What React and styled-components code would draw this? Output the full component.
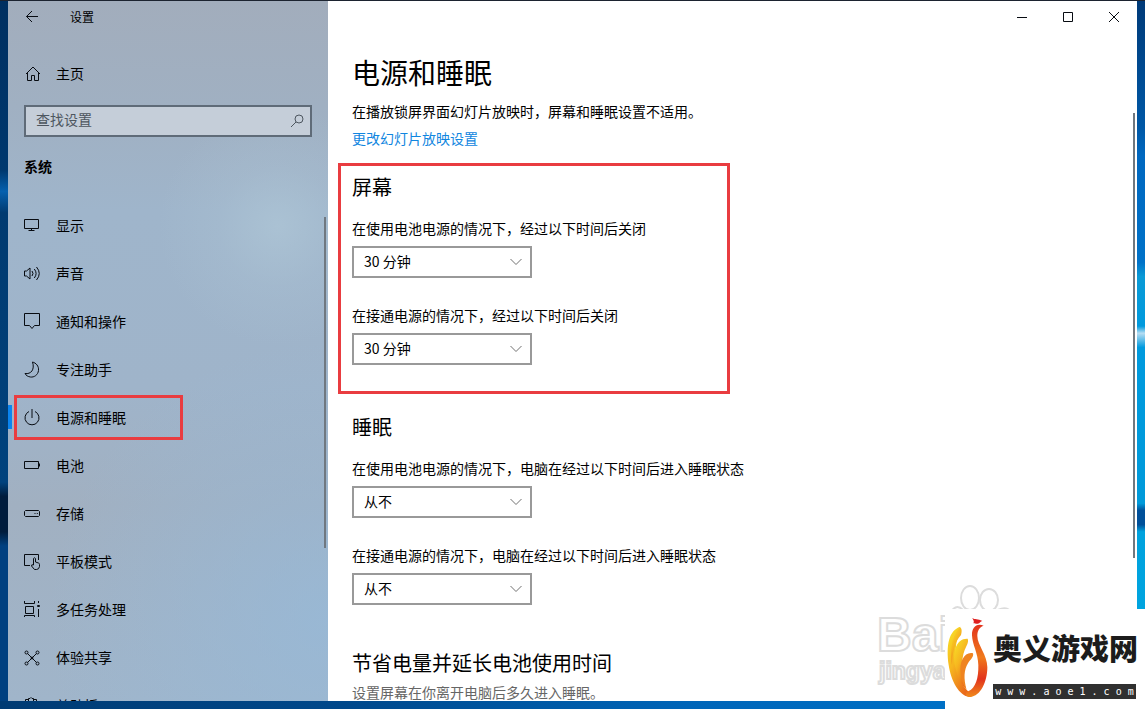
import React from "react";
import styled, { createGlobalStyle } from "styled-components";

const GlobalStyle = createGlobalStyle`
  *, *::before, *::after { box-sizing: border-box; }
  body {
    margin: 0;
    font-family: "Noto Sans CJK SC", "Liberation Sans", sans-serif;
    font-size: 14px;
    line-height: 20px;
    color: #000;
  }
  h1, h2, p, ul { margin: 0; padding: 0; font-weight: 400; }
  button, input, select { font: inherit; color: inherit; }
`;

const Desktop = styled.div`
  position: relative;
  display: flex;
  height: 100vh;
  padding: 1px 8px 8px;
  overflow: hidden;
  background:
    linear-gradient(90deg, #003b73, #00488b 30%, #0065b8 60%, #0079d0) bottom / 100% 8px no-repeat,
    linear-gradient(#1c2330, #1c2330) top / 100% 1px no-repeat,
    linear-gradient(#002f60, #00386e 24%, #0560ae 27%, #003a70 30%, #00427d 68%, #001c3c 70%, #001c3c 75%, #004080 77%) left / 8px 100% no-repeat,
    linear-gradient(#003a78, #0058a6 18%, #0068c0 22%, #0072c8 37%, #0a9ad6 39%, #009ade 46%, #b5dcf2 47%, #009ade 49%, #009ada 71%, #00509a 72%, #00509a 74%, #00a2de 75%, #00a6e0) right / 8px 100% no-repeat,
    #00488b;
`;

const Window = styled.div`
  flex: 1;
  display: flex;
  min-width: 0;
  overflow: hidden;
  background: #fff;
`;

const Sidebar = styled.aside`
  position: relative;
  flex: 0 0 320px;
  overflow: hidden;
  background:
    radial-gradient(circle at 270px 225px, rgba(178, 202, 217, 0.6), rgba(178, 202, 217, 0.2) 60px, rgba(178, 202, 217, 0) 120px),
    radial-gradient(circle at 320px 620px, rgba(150, 186, 218, 0.7), rgba(150, 186, 218, 0) 280px),
    linear-gradient(#a2adbc, #a0b0c2 15%, #9fb5cb 30%, #9fb4ca 55%, #a1b0c1 72%, #a0b5ca);
`;

const SidebarTitle = styled.header`
  display: flex;
  align-items: center;
  height: 32px;
  font-size: 12px;
`;

const BackButton = styled.button`
  display: flex;
  align-items: center;
  justify-content: center;
  width: 48px;
  height: 32px;
  margin-right: 14px;
  padding: 0;
  border: 0;
  background: none;
`;

const NavLink = styled.a`
  position: relative;
  display: flex;
  align-items: center;
  gap: 16px;
  height: 48px;
  padding: 0 16px;
  color: #000;
  text-decoration: none;
`;

const NavText = styled.span`
  padding-bottom: 2px;
`;

const HomeLink = styled(NavLink)`
  margin-top: 17px;
`;

const ActiveBar = styled.span`
  position: absolute;
  left: 0;
  top: 11px;
  width: 4px;
  height: 24px;
  background: #0a84f0;
`;

const Callout = styled.span`
  position: absolute;
  left: 6px;
  top: 1px;
  width: 169px;
  height: 45px;
  border: 3px solid #e93c40;
`;

const Search = styled.label`
  display: flex;
  align-items: center;
  height: 32px;
  margin: 7px 16px 0;
  padding: 0 5px 0 10px;
  border: 2px solid #5f6b78;
  background: #c5ced9;
`;

const SearchInput = styled.input`
  flex: 1;
  min-width: 0;
  height: 24px;
  padding: 0 0 4px;
  border: 0;
  outline: 0;
  background: none;
  &::placeholder { color: #4d565f; opacity: 1; }
`;

const SidebarHeading = styled.h2`
  margin: 17px 16px 24px;
  font-size: 14px;
  line-height: 24px;
  font-weight: 700;
`;

const NavList = styled.ul`
  list-style: none;
`;

const Scrollbar = styled.div`
  position: absolute;
  right: 2px;
  top: ${(p) => p.$top};
  width: 2px;
  height: ${(p) => p.$height};
  background: #707880;
`;

const Icon = styled.svg`
  flex: none;
  width: ${(p) => p.$size || 16}px;
  height: ${(p) => p.$size || 16}px;
  overflow: visible;
  fill: none;
  stroke: ${(p) => p.$color || "#080c12"};
  stroke-width: ${(p) => p.$weight || 1};
`;

const Main = styled.main`
  position: relative;
  flex: 1;
  min-width: 0;
  overflow: hidden;
`;

const WindowControls = styled.div`
  display: flex;
  justify-content: flex-end;
`;

const ControlButton = styled.button`
  display: flex;
  align-items: center;
  justify-content: center;
  width: 46px;
  height: 32px;
  padding: 0;
  border: 0;
  background: none;
`;

const Content = styled.div`
  padding: 19px 24px 0 10px;
`;

const Intro = styled.div`
  padding-left: 14px;
`;

const Title = styled.h1`
  margin-bottom: 9px;
  font-size: 28px;
  line-height: 40px;
`;

const TextLink = styled.a`
  display: inline-block;
  margin-top: 7px;
  color: #1086e0;
  text-decoration: none;
`;

const Section = styled.section`
  max-width: 392px;
  margin-top: ${(p) => p.$gap}px;
  padding: ${(p) => (p.$marked ? "7px 11px 26px" : "0 11px")};
  border: 3px solid ${(p) => (p.$marked ? "#e93c40" : "transparent")};
  border-width: ${(p) => (p.$marked ? "3px" : "0 3px")};
  white-space: nowrap;
`;

const SectionTitle = styled.h2`
  font-size: 20px;
  line-height: 28px;
`;

const Field = styled.div`
  margin-top: ${(p) => (p.$first ? 17 : 27)}px;
`;

const FieldLabel = styled.label`
  display: block;
  margin-bottom: 8px;
`;

const SelectBox = styled.div`
  position: relative;
  width: 180px;
  height: 32px;
`;

const Select = styled.select`
  width: 100%;
  height: 100%;
  padding: 0 32px 2px 10px;
  border: 2px solid #999;
  border-radius: 0;
  background: #fff;
  appearance: none;
`;

const Chevron = styled.svg`
  position: absolute;
  right: 10px;
  top: 12px;
  width: 12px;
  height: 8px;
  fill: none;
  stroke: #707070;
  pointer-events: none;
`;

const Hint = styled.p`
  margin-top: 5px;
  color: #666;
`;

const Watermark = styled.svg`
  position: absolute;
  right: 120px;
  bottom: 0;
  width: 150px;
  height: 120px;
  fill: #fff;
  stroke: #dcdcdc;
  stroke-width: 2;
  font-family: "Liberation Sans", sans-serif;
  font-weight: 700;
`;

const Brand = styled.div`
  position: absolute;
  right: 0;
  bottom: 0;
  display: flex;
  width: 200px;
  height: 100px;
  background: #fff;
`;

const BrandMark = styled.svg`
  flex: none;
  width: 48px;
  height: 100px;
`;

const BrandText = styled.div`
  flex: 1;
  padding-top: 13px;
`;

const BrandName = styled.div`
  font-family: "Noto Sans CJK SC", sans-serif;
  font-weight: 900;
  font-size: 29px;
  line-height: 50px;
  color: #1c1c1c;
  white-space: nowrap;
`;

const BrandUrl = styled.div`
  width: 143px;
  margin-top: 12px;
  background: #303030;
  color: #fff;
  font-family: "DejaVu Sans Mono", monospace;
  font-size: 10px;
  line-height: 15px;
  text-align: center;
  white-space: nowrap;
`;

const icons = {
  display: <path d="M.5 1.5h14v9H.5zM7.5 10.5v2M4.5 12.5h6" />,
  sound: (
    <path d="M.5 5v5h2l3.500 3V2l-3.500 3zM8 5q2 2.500 0 5M10.300 3q3.600 4.500 0 9M12.500 1q5.500 6.500 0 13" />
  ),
  notice: <path d="M.5 -.5h15v12h-5L8 14.500 5.500 11.500H.5z" />,
  moon: <path d="M8.500 0C12 1 15 4 14.500 8.500C14 13 10 15.500 6.500 15C4 14.700 2 13.500 1 11.500C7 12.500 11 7.500 8.500 0z" />,
  power: <path d="M5 1.500A7 7 0 1 0 11 1.500M8 -1V8" />,
  battery: <path d="M.5 3.500h14v7H.5zM15.500 5.500v3" />,
  storage: <path d="M1.500 4.500h13l1 1v4l-1 1h-13l-1-1v-4zM10.500 7.500h1M12.800 7.500h1" />,
  tablet: (
    <path d="M6 11.500H.5V.5h14V6M9.500 11V4.500q1-1.500 2 0V8l3 1q1 .3 1 1.500v2q-.5 3-3 3H10.500L7.500 12q-.2-2 2-1" />
  ),
  tasks: (
    <path d="M.5 -1v2.500h10V-1M1.500 4.500h8v7h-8zM.5 15v-1.500h10V15M14.500 -1v2M14.500 7v8M13.500 3.500h2v1h-2z" />
  ),
  share: (
    <>
      <path d="M3.500 3.500L12.500 12.500M12.500 3.500L3.500 12.500" />
      <circle cx="2.500" cy="2.500" r="1.500" />
      <circle cx="13.500" cy="2.500" r="1.500" />
      <circle cx="2.500" cy="13.500" r="1.500" />
      <circle cx="13.500" cy="13.500" r="1.500" />
      <circle cx="8" cy="8" r="1" />
    </>
  ),
  clipboard: <path d="M4.500 1.500h-3v14h11v-14h-3M4.500 3.500v-3h1.500q1-2 2 0h1.500v3z" />,
};

const navItems = [
  ["display", "显示"],
  ["sound", "声音"],
  ["notice", "通知和操作"],
  ["moon", "专注助手"],
  ["power", "电源和睡眠", true],
  ["battery", "电池"],
  ["storage", "存储"],
  ["tablet", "平板模式"],
  ["tasks", "多任务处理"],
  ["share", "体验共享"],
  ["clipboard", "剪贴板"],
];

function SelectField({ id, label, value, first }) {
  return (
    <Field $first={first}>
      <FieldLabel htmlFor={id}>{label}</FieldLabel>
      <SelectBox>
        <Select id={id} defaultValue={value}>
          <option>30 分钟</option>
          <option>从不</option>
        </Select>
        <Chevron viewBox="0 0 12 8" aria-hidden="true">
          <path d="M.5 1L6 6.500 11.500 1" />
        </Chevron>
      </SelectBox>
    </Field>
  );
}

export default function App() {
  return (
    <>
      <GlobalStyle />
      <Desktop>
        <Window>
          <Sidebar>
            <SidebarTitle>
              <BackButton aria-label="返回">
                <Icon viewBox="0 0 16 16">
                  <path d="M14 7.500H2.500M8 2L2.500 7.500 8 13" />
                </Icon>
              </BackButton>
              设置
            </SidebarTitle>
            <HomeLink href="#home">
              <Icon viewBox="0 0 16 16">
                <path d="M2 8L9 1 16 8M3.500 7v7.500h4v-5h3v5h4V7" />
              </Icon>
              <NavText>主页</NavText>
            </HomeLink>
            <Search>
              <SearchInput type="text" placeholder="查找设置" aria-label="查找设置" />
              <Icon viewBox="0 0 16 16" $color="#4d565f">
                <circle cx="10" cy="6" r="4" />
                <path d="M7 9L2 14" />
              </Icon>
            </Search>
            <SidebarHeading>系统</SidebarHeading>
            <NavList>
              {navItems.map(([icon, text, active]) => (
                <li key={icon}>
                  <NavLink href={"#" + icon} aria-current={active ? "page" : undefined}>
                    {active && <ActiveBar />}
                    {active && <Callout />}
                    <Icon viewBox="0 0 16 16" aria-hidden="true">{icons[icon]}</Icon>
                    <NavText>{text}</NavText>
                  </NavLink>
                </li>
              ))}
            </NavList>
            <Scrollbar $top="216px" $height="331px" />
          </Sidebar>
          <Main>
            <WindowControls>
              <ControlButton aria-label="最小化">
                <Icon viewBox="0 0 10 10" $size={10}><path d="M0 5.500h10" /></Icon>
              </ControlButton>
              <ControlButton aria-label="最大化">
                <Icon viewBox="0 0 10 10" $size={10}><path d="M.5 .5h9v9h-9z" /></Icon>
              </ControlButton>
              <ControlButton aria-label="关闭">
                <Icon viewBox="0 0 10 10" $size={10}><path d="M0 0L10 10M10 0L0 10" /></Icon>
              </ControlButton>
            </WindowControls>
            <Watermark viewBox="0 0 150 120" aria-hidden="true">
              <ellipse cx="103" cy="17" rx="9" ry="12" />
              <ellipse cx="122" cy="19" rx="9" ry="11" />
              <path d="M82 35q6-14 14-6M131 29q8-4 12 1" />
              <text x="10" y="70" fontSize="48">Bai</text>
              <text x="12" y="98" fontSize="23">jingyan</text>
            </Watermark>
            <Content>
              <Intro>
                <Title>电源和睡眠</Title>
                <p>在播放锁屏界面幻灯片放映时，屏幕和睡眠设置不适用。</p>
                <TextLink href="#slideshow">更改幻灯片放映设置</TextLink>
              </Intro>
              <Section $marked $gap={15}>
                <SectionTitle>屏幕</SectionTitle>
                <SelectField first id="screen-battery" label="在使用电池电源的情况下，经过以下时间后关闭" value="30 分钟" />
                <SelectField id="screen-plugged" label="在接通电源的情况下，经过以下时间后关闭" value="30 分钟" />
              </Section>
              <Section $gap={19}>
                <SectionTitle>睡眠</SectionTitle>
                <SelectField first id="sleep-battery" label="在使用电池电源的情况下，电脑在经过以下时间后进入睡眠状态" value="从不" />
                <SelectField id="sleep-plugged" label="在接通电源的情况下，电脑在经过以下时间后进入睡眠状态" value="从不" />
              </Section>
              <Section $gap={44}>
                <SectionTitle>节省电量并延长电池使用时间</SectionTitle>
                <Hint>设置屏幕在你离开电脑后多久进入睡眠。</Hint>
              </Section>
            </Content>
            <Scrollbar $top="112px" $height="445px" />
          </Main>
        </Window>
        <Brand>
          <BrandMark viewBox="255 117 144 300" aria-hidden="true">
            <defs>
              <linearGradient id="feather" x1="0" y1="0" x2="0.6" y2="1">
                <stop offset="0" stopColor="#f8e528" />
                <stop offset="0.5" stopColor="#f6b51f" />
                <stop offset="1" stopColor="#ea6a1a" />
              </linearGradient>
              <linearGradient id="body" x1="0" y1="0" x2="0" y2="1">
                <stop offset="0" stopColor="#e2331d" />
                <stop offset="0.45" stopColor="#f07a1c" />
                <stop offset="0.75" stopColor="#e2331d" />
                <stop offset="1" stopColor="#f08a1c" />
              </linearGradient>
            </defs>
            <path fill="url(#feather)" d="M301 170C266 182 258 225 266 285C273 335 298 377 328 381C340 381 338 372 326 365C292 338 272 250 301 170z" />
            <path fill="url(#feather)" d="M300 172C270 205 270 255 276 285C277 250 284 215 303 195C306 185 306 175 300 172z" />
            <path fill="url(#feather)" d="M323 206C290 204 275 245 286 292C293 325 306 348 318 357C303 312 303 268 314 240C320 226 327 216 323 206z" />
            <path fill="#ef8420" d="M339 250C315 244 297 274 302 310C305 333 312 350 320 360C310 325 312 300 324 280C331 268 342 262 339 250z" />
            <path fill="url(#body)" d="M371 167C350 158 335 172 336 196C337 225 354 248 355 285C356 325 346 355 326 363C314 367 313 380 330 381C362 379 382 335 382 292C382 255 352 225 352 198C352 180 360 170 371 167z" />
            <path fill="#df2020" d="M337 144C344 150 354 145 367 153C360 154 361 160 353 161C347 163 344 158 340 160C344 153 339 150 337 144z" />
          </BrandMark>
          <BrandText>
            <BrandName>奥义游戏网</BrandName>
            <BrandUrl>w w w . a o e 1 . c o m</BrandUrl>
          </BrandText>
        </Brand>
      </Desktop>
    </>
  );
}
